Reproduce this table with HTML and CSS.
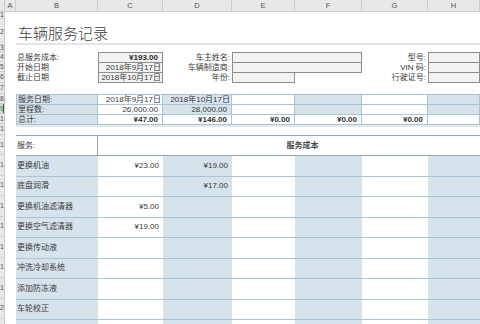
FILE: index.html
```
<!DOCTYPE html>
<html lang="zh-CN">
<head>
<meta charset="utf-8">
<title>车辆服务记录</title>
<link rel="stylesheet" href="styles.css">
</head>
<body>
<div class="colhead">
  <span class="corner"></span><span>A</span><span>B</span><span>C</span><span>D</span><span>E</span><span>F</span><span>G</span><span>H</span>
</div>
<div class="main">
  <div class="rowhead">
    <span>1</span><span>2</span><span>3</span><span>4</span><span>5</span><span>6</span><span>7</span><span>8</span><span class="active">9</span><span>10</span><span>11</span><span>12</span><span>13</span><span>14</span><span>15</span><span>16</span><span>17</span><span>18</span><span>19</span><span>20</span><span>21</span>
  </div>
  <div class="sheet">
    <h1 class="title">车辆服务记录</h1>

    <div class="info">
      <div class="irow">
        <div class="c">总服务成本:</div>
        <div class="c r box b num">¥193.00</div>
        <div class="c r lbl">车主姓名:</div>
        <div class="c box span2"></div>
        <div class="c r lbl">型号:</div>
        <div class="c box"></div>
      </div>
      <div class="irow">
        <div class="c">开始日期</div>
        <div class="c r box">2018年9月17日</div>
        <div class="c r lbl">车辆制造商:</div>
        <div class="c box span2"></div>
        <div class="c r lbl">VIN 码:</div>
        <div class="c box"></div>
      </div>
      <div class="irow">
        <div class="c">截止日期</div>
        <div class="c r box">2018年10月17日</div>
        <div class="c r lbl">年份:</div>
        <div class="c box"></div>
        <div class="c"></div>
        <div class="c r lbl">行驶证号:</div>
        <div class="c box"></div>
      </div>
    </div>

    <div class="sum">
      <div class="srow">
        <div class="c fill first">服务日期:</div>
        <div class="c r">2018年9月17日</div>
        <div class="c r fill">2018年10月17日</div>
        <div class="c"></div>
        <div class="c fill"></div>
        <div class="c"></div>
        <div class="c fill"></div>
      </div>
      <div class="srow">
        <div class="c fill first">里程数:</div>
        <div class="c r num">26,000.00</div>
        <div class="c r fill num">28,000.00</div>
        <div class="c"></div>
        <div class="c fill"></div>
        <div class="c"></div>
        <div class="c fill"></div>
      </div>
      <div class="srow">
        <div class="c fill first">总计:</div>
        <div class="c r num b">¥47.00</div>
        <div class="c r num b">¥146.00</div>
        <div class="c r num b">¥0.00</div>
        <div class="c r num b">¥0.00</div>
        <div class="c r num b">¥0.00</div>
        <div class="c"></div>
      </div>
    </div>

    <div class="svc">
      <div class="shead">
        <div class="c">服务:</div>
        <div class="c hcost">服务成本</div>
      </div>
      <div class="vrow">
        <div class="c fill">更换机油</div>
        <div class="c r num">¥23.00</div>
        <div class="c r num fill">¥19.00</div>
        <div class="c"></div><div class="c fill"></div><div class="c"></div><div class="c fill"></div>
      </div>
      <div class="vrow">
        <div class="c fill">底盘润滑</div>
        <div class="c"></div>
        <div class="c r num fill">¥17.00</div>
        <div class="c"></div><div class="c fill"></div><div class="c"></div><div class="c fill"></div>
      </div>
      <div class="vrow">
        <div class="c fill">更换机油滤清器</div>
        <div class="c r num">¥5.00</div>
        <div class="c fill"></div>
        <div class="c"></div><div class="c fill"></div><div class="c"></div><div class="c fill"></div>
      </div>
      <div class="vrow">
        <div class="c fill">更换空气滤清器</div>
        <div class="c r num">¥19.00</div>
        <div class="c fill"></div>
        <div class="c"></div><div class="c fill"></div><div class="c"></div><div class="c fill"></div>
      </div>
      <div class="vrow">
        <div class="c fill">更换传动液</div>
        <div class="c"></div>
        <div class="c fill"></div>
        <div class="c"></div><div class="c fill"></div><div class="c"></div><div class="c fill"></div>
      </div>
      <div class="vrow">
        <div class="c fill">冲洗冷却系统</div>
        <div class="c"></div>
        <div class="c fill"></div>
        <div class="c"></div><div class="c fill"></div><div class="c"></div><div class="c fill"></div>
      </div>
      <div class="vrow">
        <div class="c fill">添加防冻液</div>
        <div class="c"></div>
        <div class="c fill"></div>
        <div class="c"></div><div class="c fill"></div><div class="c"></div><div class="c fill"></div>
      </div>
      <div class="vrow">
        <div class="c fill">车轮校正</div>
        <div class="c"></div>
        <div class="c fill"></div>
        <div class="c"></div><div class="c fill"></div><div class="c"></div><div class="c fill"></div>
      </div>
      <div class="vrow">
        <div class="c fill"></div>
        <div class="c"></div>
        <div class="c fill"></div>
        <div class="c"></div><div class="c fill"></div><div class="c"></div><div class="c fill"></div>
      </div>
    </div>
  </div>
</div>
</body>
</html>
```
FILE: styles.css
```
* { box-sizing: border-box; }

body {
  margin: 0;
  width: 480px;
  height: 324px;
  overflow: hidden;
  background: #fff;
  font-family: "Liberation Sans", "Noto Sans CJK SC", sans-serif;
  font-size: 8px;
  line-height: 10px;
  color: #3a3a3a;
}

.colhead {
  display: grid;
  grid-template-columns: 5px 11px 82px 65px 69px 63px 67px 66px 52px;
  height: 12px;
  background: #e8e8e8;
  border-bottom: 1px solid #cfcfcf;
}
.colhead span {
  border-right: 1px solid #cbcbcb;
  text-align: center;
  font-size: 7.5px;
  line-height: 11px;
  color: #555;
}

.main {
  display: flex;
  height: 312px;
  overflow: hidden;
}

.rowhead {
  width: 5px;
  flex: none;
  display: grid;
  grid-template-rows: 7px 26px 7px 10px 10px 11px 11px 10px 10px 10px 11px 20px repeat(9, 20.5px);
  background: #e8e8e8;
  border-right: 1px solid #cbcbcb;
  overflow: hidden;
}
.rowhead span {
  display: flex;
  align-items: center;
  justify-content: flex-end;
  border-bottom: 1px solid #cfcfcf;
  font-size: 7px;
  color: #555;
  overflow: hidden;
  padding-right: 2px;
  direction: rtl;
}
.rowhead .active {
  background: #d6d6d6;
  box-shadow: inset -1px 0 0 #217346;
  color: #217346;
}

.sheet {
  flex: 1;
  display: flex;
  flex-direction: column;
  overflow: hidden;
  min-width: 0;
}

.title {
  margin: 0 0 0 11px;
  padding: 13px 0 3px 2px;
  height: 33px;
  border-bottom: 2px solid #dfe6eb;
  font-family: "Noto Sans CJK SC", sans-serif;
  font-size: 15px;
  line-height: 15px;
  font-weight: 300;
  color: #3c3c3c;
}

.c {
  display: flex;
  align-items: center;
  padding: 0 1px;
  white-space: nowrap;
  overflow: hidden;
  min-width: 0;
}
.r { justify-content: flex-end; }
.num { padding-right: 4px; }
.b { font-weight: bold; color: #2f2f2f; }
.fill { background: #d6e3eb; }

/* info block */
.info {
  margin: 7px 0 0 11px;
}
.irow {
  display: grid;
  grid-template-columns: 82px 65px 69px 63px 67px 66px 1fr;
  height: 11px;
}
.irow + .irow { margin-top: -1px; }
.box {
  background: #f2f2f2;
  border: 1px solid #8e8e8e;
  border-right-width: 1px;
}
.span2 { grid-column: span 2; }
.lbl { padding-right: 2px; }

/* summary block */
.sum {
  margin: 11px 0 0 11px;
  border-top: 1px solid #a9c4d4;
  border-bottom: 2px solid #e3eaef;
}
.srow {
  display: grid;
  grid-template-columns: 82px 65px 69px 63px 67px 66px 1fr;
  height: 10px;
}
.srow .c {
  border-right: 1px solid #a9c4d4;
  border-bottom: 1px solid #a9c4d4;
}
.srow .first {
  border-left: 1px solid #a9c4d4;
}

/* services table */
.svc {
  margin: 8px 0 0 11px;
  border-top: 1px solid #8fa5b3;
}
.shead {
  display: grid;
  grid-template-columns: 82px 1fr;
  height: 20px;
  border-bottom: 1px solid #8fa5b3;
}
.shead .c:first-child {
  border-right: 1px solid #8fa5b3;
}
.hcost {
  justify-content: center;
  padding-left: 28px;
  font-weight: bold;
  color: #4a4a4a;
}
.vrow {
  display: grid;
  grid-template-columns: 82px 65px 69px 63px 67px 66px 1fr;
  height: 20.5px;
}
.vrow .c {
  border-bottom: 1px solid #a9c5d5;
}
```
